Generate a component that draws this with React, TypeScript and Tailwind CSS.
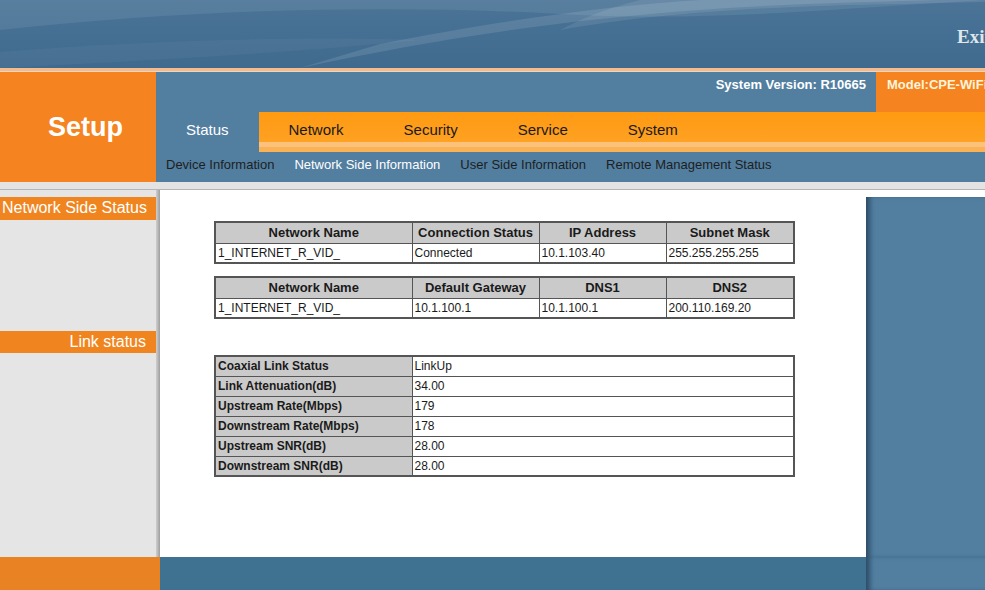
import React from 'react';

const FONT = { fontFamily: '"Liberation Sans", Arial, sans-serif' };

const tabs = ['Status', 'Network', 'Security', 'Service', 'System'];
const subTabs = ['Device Information', 'Network Side Information', 'User Side Information', 'Remote Management Status'];

const linkRows: [string, string][] = [
    ['Coaxial Link Status', 'LinkUp'],
    ['Link Attenuation(dB)', '34.00'],
    ['Upstream Rate(Mbps)', '179'],
    ['Downstream Rate(Mbps)', '178'],
    ['Upstream SNR(dB)', '28.00'],
    ['Downstream SNR(dB)', '28.00'],
];

// Banner drawing (the swooshes on the top header)
function Banner() {
    return (
        <svg className="absolute inset-0" width="985" height="68" viewBox="0 0 985 68" preserveAspectRatio="none">
            <defs>
                <linearGradient id="bg" x1="0" y1="0" x2="0" y2="1">
                    <stop offset="0" stopColor="#4b7497" />
                    <stop offset="1" stopColor="#3f6a8e" />
                </linearGradient>
            </defs>
            <rect width="985" height="68" fill="url(#bg)" />
            <path d="M0 30 C180 10 380 4 560 14 C700 22 820 10 985 0 L985 0 L0 0 Z" fill="#ffffff" opacity="0.08" />
            <path d="M300 68 C430 40 560 20 700 10 C780 4 860 2 940 0 L700 0 C600 6 480 24 380 44 Z" fill="#ffffff" opacity="0.11" />
            <path d="M560 30 C650 14 760 6 900 4 L985 2 L985 0 L640 0 C600 10 580 20 560 30 Z" fill="#ffffff" opacity="0.09" />
            <path d="M0 52 C150 40 300 36 420 40 C320 50 200 58 0 68 Z" fill="#ffffff" opacity="0.04" />
        </svg>
    );
}

function HeadCell({ children, w }: { children: React.ReactNode; w: string }) {
    return (
        <th className={`${w} h-[21px] border border-[#555] bg-[#cacaca] text-center text-[13px] font-bold text-[#1a1a1a]`}>{children}</th>
    );
}

function Cell({ children, w }: { children: React.ReactNode; w: string }) {
    return <td className={`${w} h-[20px] border border-[#555] bg-white px-[2px] text-[12px] text-[#1a1a1a]`}>{children}</td>;
}

export default function App() {
    return (
        <div className="w-[985px] h-[590px] overflow-hidden bg-white" style={FONT}>
            {/* top banner */}
            <div className="relative h-[68px] overflow-hidden">
                <Banner />
                <div className="relative flex h-full items-center pt-[6px] pl-[957px]">
                    <span className="text-[19px] font-bold whitespace-nowrap text-[#dfe6ec]" style={{ fontFamily: '"Liberation Serif", serif' }}>Exit</span>
                </div>
            </div>
            <div className="h-[3px] bg-[#f6bb8c]" />
            <div className="h-[1px] bg-[#e9d6c4]" />

            {/* nav block */}
            <div className="flex h-[110px]">
                <div className="flex w-[156px] items-center bg-[#f5831f] pl-[48px]">
                    <span className="text-[27px] font-bold text-white">Setup</span>
                </div>
                <div className="flex flex-1 flex-col bg-[#527ea0]">
                    <div className="flex h-[40px] justify-end">
                        <span className="pr-[10px] pt-[3px] text-[13px] font-bold text-white">System Version: R10665</span>
                        <div className="w-[109px] overflow-hidden bg-[#f5831f] pl-[11px] pt-[3px] text-[13px] font-bold whitespace-nowrap text-[#fff4dc]">Model:CPE-WiFi</div>
                    </div>
                    <div className="flex h-[40px]">
                        <div className="flex h-full items-center px-[30px] pb-[4px] text-[15px] text-white">Status</div>
                        <div className="flex flex-1 flex-col">
                            <div className="flex h-[30px] items-end bg-gradient-to-b from-[#ff9a10] to-[#ffa122]">
                                {tabs.slice(1).map(t => (
                                    <div key={t} className="flex h-full items-center px-[30px] pt-[6px] text-[15px] text-[#1a1a1a]">{t}</div>
                                ))}
                            </div>
                            <div className="h-[5px] bg-[#fcc27c]" />
                            <div className="h-[5px] bg-[#fbb256]" />
                        </div>
                    </div>
                    <div className="flex h-[30px] items-center gap-[20px] pb-[5px] pl-[10px] text-[13px]">
                        {subTabs.map((t, i) => (
                            <span key={t} className={i === 1 ? 'text-white' : 'text-[#1e1e1e]'}>{t}</span>
                        ))}
                    </div>
                </div>
            </div>

            {/* gray separator */}
            <div className="h-[7px] bg-[#e3e3e3]" />
            <div className="h-[1px] bg-[#b5b5b5]" />

            {/* body */}
            <div className="flex h-[367px]">
                <div className="w-[156px] bg-[#e5e5e5] pt-[7px]">
                    <div className="flex h-[23px] items-center bg-[#f0851f] pl-[2px] pb-[1px] text-[16px] text-white">Network Side Status</div>
                    <div className="mt-[111px] flex h-[22px] items-center justify-end bg-[#f0851f] pr-[10px] text-[16px] text-white">Link status</div>
                </div>
                <div className="w-[4px] bg-gradient-to-r from-[#cfcfcf] to-[#9e9e9e]" />
                <div className="w-[706px] bg-white pl-[54px] pt-[31px]">
                    <table className="border-collapse border-2 border-[#555]">
                        <thead>
                            <tr>
                                <HeadCell w="w-[197px]">Network Name</HeadCell>
                                <HeadCell w="w-[127px]">Connection Status</HeadCell>
                                <HeadCell w="w-[127px]">IP Address</HeadCell>
                                <HeadCell w="w-[128px]">Subnet Mask</HeadCell>
                            </tr>
                        </thead>
                        <tbody>
                            <tr>
                                <Cell w="w-[197px]">1_INTERNET_R_VID_</Cell>
                                <Cell w="w-[127px]">Connected</Cell>
                                <Cell w="w-[127px]">10.1.103.40</Cell>
                                <Cell w="w-[128px]">255.255.255.255</Cell>
                            </tr>
                        </tbody>
                    </table>
                    <table className="mt-[12px] border-collapse border-2 border-[#555]">
                        <thead>
                            <tr>
                                <HeadCell w="w-[197px]">Network Name</HeadCell>
                                <HeadCell w="w-[127px]">Default Gateway</HeadCell>
                                <HeadCell w="w-[127px]">DNS1</HeadCell>
                                <HeadCell w="w-[128px]">DNS2</HeadCell>
                            </tr>
                        </thead>
                        <tbody>
                            <tr>
                                <Cell w="w-[197px]">1_INTERNET_R_VID_</Cell>
                                <Cell w="w-[127px]">10.1.100.1</Cell>
                                <Cell w="w-[127px]">10.1.100.1</Cell>
                                <Cell w="w-[128px]">200.110.169.20</Cell>
                            </tr>
                        </tbody>
                    </table>
                    <table className="mt-[36px] border-collapse border-2 border-[#555]">
                        <tbody>
                            {linkRows.map(([k, v]) => (
                                <tr key={k}>
                                    <td className="h-[20px] w-[197px] border border-[#555] bg-[#cacaca] px-[2px] text-[12px] font-bold text-[#1a1a1a]">{k}</td>
                                    <Cell w="w-[382px]">{v}</Cell>
                                </tr>
                            ))}
                        </tbody>
                    </table>
                </div>
                <div className="flex flex-1 flex-col bg-white pt-[7px]">
                    <div className="flex-1 bg-[#527ea0] shadow-[inset_6px_0_5px_-2px_#2e4e68]" />
                </div>
            </div>

            {/* footer */}
            <div className="flex h-[33px]">
                <div className="w-[160px] bg-[#e88222]" />
                <div className="w-[706px] bg-[#3f7290]" />
                <div className="flex-1 bg-[#527ea0] shadow-[inset_6px_0_5px_-2px_#2e4e68]" />
            </div>
        </div>
    );
}
